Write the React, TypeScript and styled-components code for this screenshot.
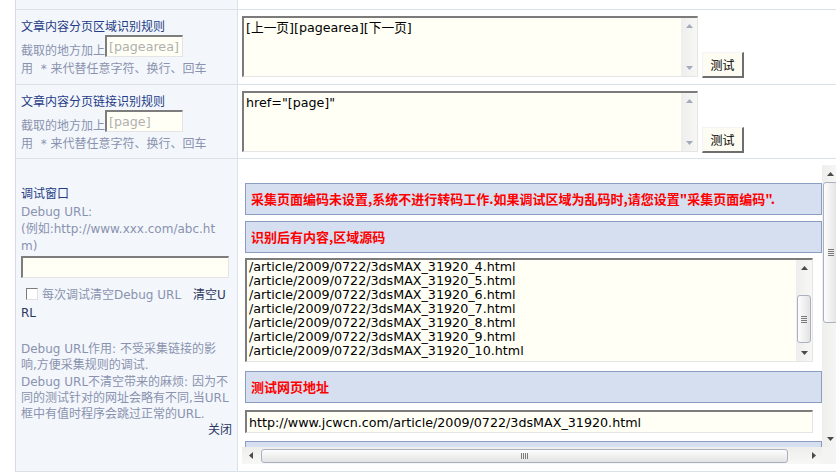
import React from "react";
import styled, { createGlobalStyle } from "styled-components";

const GlobalStyle = createGlobalStyle`
  html, body {
    margin: 0;
    padding: 0;
    background: #fff;
    overflow: hidden;
  }
  body {
    font-family: "DejaVu Sans", "Noto Sans CJK SC", sans-serif;
    font-size: 12px;
    color: #000;
  }
`;

const FIELD_FONT = `"DejaVu Sans", "Noto Sans CJK SC", sans-serif`;

const Table = styled.div`
  margin-left: 15px;
  width: 840px;
  border-left: 1px solid #d3dbe7;
`;

const Row = styled.div<{ $h: number }>`
  display: grid;
  grid-template-columns: 222px 1fr;
  height: ${(p) => p.$h}px;
  border-bottom: 1px solid #dbe1e9;
`;

const LeftCell = styled.div<{ $pt: number }>`
  box-sizing: border-box;
  background: #f3f7fc;
  border-right: 1px solid #dbe1e9;
  padding: ${(p) => p.$pt}px 5px 0;
  color: #8a92ae;
`;

const RightCell = styled.div<{ $pt: number }>`
  display: flex;
  align-items: flex-end;
  align-self: start;
  gap: 4px;
  padding: ${(p) => p.$pt}px 0 0 4px;
`;

const CellTitle = styled.div`
  font-family: "Noto Sans CJK SC", sans-serif;
  line-height: 16px;
  height: 16px;
  color: #1f3c86;
`;

const RuleLine = styled.div`
  display: flex;
  align-items: flex-end;
  margin-top: 1px;
  line-height: 14px;
  font-family: "Noto Sans CJK SC", sans-serif;
`;

const HelpLine = styled.div`
  margin-top: 4px;
  line-height: 16px;
  white-space: nowrap;
`;

const SmallInput = styled.input<{ $w: number }>`
  box-sizing: border-box;
  width: ${(p) => p.$w}px;
  height: 22px;
  margin: 0;
  padding: 0 2px;
  border-style: solid;
  border-width: 2px 1px 1px 2px;
  border-color: #7d7d7d #e4e4e4 #e4e4e4 #7d7d7d;
  background: #fffff5;
  font: 12.7px ${FIELD_FONT};
  color: ${(p) => (p.readOnly ? "#b0b0b0" : "#000")};
  outline: none;
`;

const Field = styled.div<{ $w: number; $h: number }>`
  display: flex;
  flex: none;
  box-sizing: border-box;
  width: ${(p) => p.$w}px;
  height: ${(p) => p.$h}px;
  border-style: solid;
  border-width: 2px 1px 1px 2px;
  border-color: #7b7b7b #e6e6e6 #e6e6e6 #7b7b7b;
  background: #fffff5;
`;

const TextArea = styled.textarea<{ $pt: number }>`
  flex: 1;
  min-width: 0;
  margin: 0;
  border: 0;
  padding: ${(p) => p.$pt}px 2px 0;
  background: transparent;
  font: 12.7px/14px ${FIELD_FONT};
  color: #000;
  resize: none;
  overflow: hidden;
  outline: none;
  white-space: pre;
`;

const TestButton = styled.button`
  box-sizing: border-box;
  width: 42px;
  height: 26px;
  margin: 0 0 -1px;
  padding: 0;
  border-style: solid;
  border-width: 1px 2px 2px 1px;
  border-color: #f4f4f4 #6e6e6e #6e6e6e #f4f4f4;
  background: #fcfcf2;
  font: 12px "Noto Sans CJK SC", sans-serif;
  color: #000;
`;

/* ---------- fake scroll bars ---------- */

const Bar = styled.div<{ $dir: "v" | "h"; $size: number }>`
  display: flex;
  flex: none;
  flex-direction: ${(p) => (p.$dir === "v" ? "column" : "row")};
  ${(p) => (p.$dir === "v" ? `width: ${p.$size}px;` : `height: ${p.$size}px;`)}
  background: ${(p) =>
    p.$dir === "v"
      ? "linear-gradient(90deg, #eeeeec, #f7f7f5)"
      : "linear-gradient(180deg, #eeeeec, #f7f7f5)"};
`;

const ArrowBox = styled.div<{ $size: number }>`
  flex: none;
  width: ${(p) => p.$size}px;
  height: ${(p) => p.$size}px;
  display: flex;
  align-items: center;
  justify-content: center;
`;

const Track = styled.div<{ $dir: "v" | "h" }>`
  flex: 1;
  display: flex;
  flex-direction: ${(p) => (p.$dir === "v" ? "column" : "row")};
`;

const Thumb = styled.div<{ $dir: "v" | "h"; $start: number; $len: number }>`
  box-sizing: border-box;
  flex: none;
  display: flex;
  align-items: center;
  justify-content: center;
  ${(p) =>
    p.$dir === "v"
      ? `margin-top: ${p.$start}px; height: ${p.$len}px; margin-left: 1px; margin-right: 1px;`
      : `margin-left: ${p.$start}px; width: ${p.$len}px; margin-top: 2px; margin-bottom: 1px;`}
  border: 1px solid #a9b0bf;
  border-radius: 3px;
  background: ${(p) =>
    p.$dir === "v"
      ? "linear-gradient(90deg, #fdfdfd, #e3e3e3)"
      : "linear-gradient(180deg, #fdfdfd, #e3e3e3)"};
`;

const Grip = styled.div<{ $dir: "v" | "h" }>`
  ${(p) =>
    p.$dir === "v"
      ? `width: 6px; height: 7px; background: repeating-linear-gradient(180deg, #7a7a7a 0 1px, transparent 1px 2px);`
      : `width: 7px; height: 6px; background: repeating-linear-gradient(90deg, #7a7a7a 0 1px, transparent 1px 2px);`}
`;

type Side = "up" | "down" | "left" | "right";

const ARROW_POINTS: Record<Side, string> = {
  up: "0,4 3.5,0 7,4",
  down: "0,0 3.5,4 7,0",
  left: "4,0 0,3.5 4,7",
  right: "0,0 4,3.5 0,7",
};

const Arrow: React.FC<{ side: Side; muted?: boolean }> = ({ side, muted }) => {
  const flat = side === "up" || side === "down";
  return (
    <svg width={flat ? 7 : 4} height={flat ? 4 : 7} viewBox={flat ? "0 0 7 4" : "0 0 4 7"}>
      <polygon points={ARROW_POINTS[side]} fill={muted ? "#a3abbb" : "#4a4a4a"} />
    </svg>
  );
};

interface ScrollBarProps {
  dir: "v" | "h";
  size: number;
  thumb?: [number, number];
  muted?: boolean;
}

const ScrollBar: React.FC<ScrollBarProps> = ({ dir, size, thumb, muted }) => (
  <Bar $dir={dir} $size={size}>
    <ArrowBox $size={size}>
      <Arrow side={dir === "v" ? "up" : "left"} muted={muted} />
    </ArrowBox>
    <Track $dir={dir}>
      {thumb && (
        <Thumb $dir={dir} $start={thumb[0]} $len={thumb[1]}>
          <Grip $dir={dir} />
        </Thumb>
      )}
    </Track>
    <ArrowBox $size={size}>
      <Arrow side={dir === "v" ? "down" : "right"} muted={muted} />
    </ArrowBox>
  </Bar>
);

/* ---------- debug frame ---------- */

const DebugFrame = styled.div`
  display: grid;
  grid-template-columns: 580px 17px;
  grid-template-rows: 282px 17px;
`;

const FrameBody = styled.div`
  overflow: hidden;
  padding: 18px 0 0 3px;
  display: flex;
  flex-direction: column;
`;

const Corner = styled.div`
  background: #f4f4f2;
`;

const Notice = styled.div<{ $mb: number }>`
  flex: none;
  box-sizing: border-box;
  width: 577px;
  height: 32px;
  margin-bottom: ${(p) => p.$mb}px;
  padding-left: 5px;
  border: 1px solid #8b9dc3;
  background: #d5dfef;
  font: bold 13px/30px "Noto Sans CJK SC", sans-serif;
  color: #ff0000;
  white-space: nowrap;
`;

const FrameInput = styled.input`
  flex: none;
  box-sizing: border-box;
  width: 568px;
  height: 23px;
  margin: 0 0 8px;
  padding: 0 2px;
  border-style: solid;
  border-width: 2px 1px 1px 2px;
  border-color: #7d7d7d #e4e4e4 #e4e4e4 #7d7d7d;
  background: #fffff5;
  font: 12.7px ${FIELD_FONT};
  color: #000;
  outline: none;
`;

const FrameField = styled(Field)`
  margin-bottom: 9px;
`;

/* ---------- left column of the debug row ---------- */

const Hint = styled.div`
  margin-top: 3px;
  line-height: 17px;
  white-space: nowrap;
`;

const UrlInput = styled(SmallInput)`
  display: block;
  margin-top: 1px;
`;

const CheckBlock = styled.div`
  margin-top: 8px;
  line-height: 18px;
  white-space: nowrap;
`;

const Check = styled.input`
  appearance: none;
  box-sizing: border-box;
  width: 12px;
  height: 12px;
  margin: 0 4px 0 5px;
  vertical-align: -1px;
  border-style: solid;
  border-width: 1px;
  border-color: #7c7c7c #e0e0e0 #e0e0e0 #7c7c7c;
  background: #fff;
`;

const DarkLink = styled.span<{ $gap?: number }>`
  color: #2d3761;
  margin-left: ${(p) => p.$gap ?? 0}px;
`;

const Note = styled.div`
  margin-top: 19px;
  line-height: 16.25px;
  white-space: nowrap;
`;

const CloseLink = styled.div`
  text-align: right;
  line-height: 16.25px;
  color: #2d3761;
`;

const urlLines = [4, 5, 6, 7, 8, 9, 10]
  .map((n) => `/article/2009/0722/3dsMAX_31920_${n}.html`)
  .join("\n");

const RuleRow: React.FC<{ h: number; title: string; tag: string; value: string }> = ({
  h,
  title,
  tag,
  value,
}) => (
  <Row $h={h}>
    <LeftCell $pt={8}>
      <CellTitle>{title}</CellTitle>
      <RuleLine>
        截取的地方加上
        <SmallInput $w={78} readOnly value={tag} />
      </RuleLine>
      <HelpLine>用{"\u00a0\u00a0"}* 来代替任意字符、换行、回车</HelpLine>
    </LeftCell>
    <RightCell $pt={6}>
      <Field $w={456} $h={61}>
        <TextArea $pt={3} readOnly value={value} />
        <ScrollBar dir="v" size={16} muted />
      </Field>
      <TestButton>测试</TestButton>
    </RightCell>
  </Row>
);

export default function App() {
  return (
    <>
      <GlobalStyle />
      <Table>
        <Row $h={9}>
          <LeftCell $pt={0} />
          <div />
        </Row>
        <RuleRow h={74} title="文章内容分页区域识别规则" tag="[pagearea]" value="[上一页][pagearea][下一页]" />
        <RuleRow h={73} title="文章内容分页链接识别规则" tag="[page]" value={'href="[page]"'} />
        <Row $h={312}>
          <LeftCell $pt={26}>
            <CellTitle>调试窗口</CellTitle>
            <Hint>
              Debug URL:
              <br />
              (例如:http://www.xxx.com/abc.ht
              <br />
              m)
            </Hint>
            <UrlInput $w={208} defaultValue="" />
            <CheckBlock>
              <Check type="checkbox" />
              每次调试清空Debug URL
              <DarkLink $gap={12}>清空U</DarkLink>
              <br />
              <DarkLink>RL</DarkLink>
            </CheckBlock>
            <Note>
              Debug URL作用: 不受采集链接的影
              <br />
              响,方便采集规则的调试.
              <br />
              Debug URL不清空带来的麻烦: 因为不
              <br />
              同的测试针对的网址会略有不同,当URL
              <br />
              框中有值时程序会跳过正常的URL.
            </Note>
            <CloseLink>关闭</CloseLink>
          </LeftCell>
          <RightCell $pt={6}>
            <DebugFrame>
              <FrameBody>
                <Notice $mb={6}>
                  采集页面编码未设置,系统不进行转码工作.如果调试区域为乱码时,请您设置"采集页面编码".
                </Notice>
                <Notice $mb={5}>识别后有内容,区域源码</Notice>
                <FrameField $w={568} $h={104}>
                  <TextArea $pt={0} readOnly value={urlLines} />
                  <ScrollBar dir="v" size={16} thumb={[19, 48]} />
                </FrameField>
                <Notice $mb={7}>测试网页地址</Notice>
                <FrameInput readOnly value="http://www.jcwcn.com/article/2009/0722/3dsMAX_31920.html" />
                <Notice $mb={0} />
              </FrameBody>
              <ScrollBar dir="v" size={17} thumb={[0, 141]} />
              <ScrollBar dir="h" size={17} thumb={[2, 527]} />
              <Corner />
            </DebugFrame>
          </RightCell>
        </Row>
      </Table>
    </>
  );
}
